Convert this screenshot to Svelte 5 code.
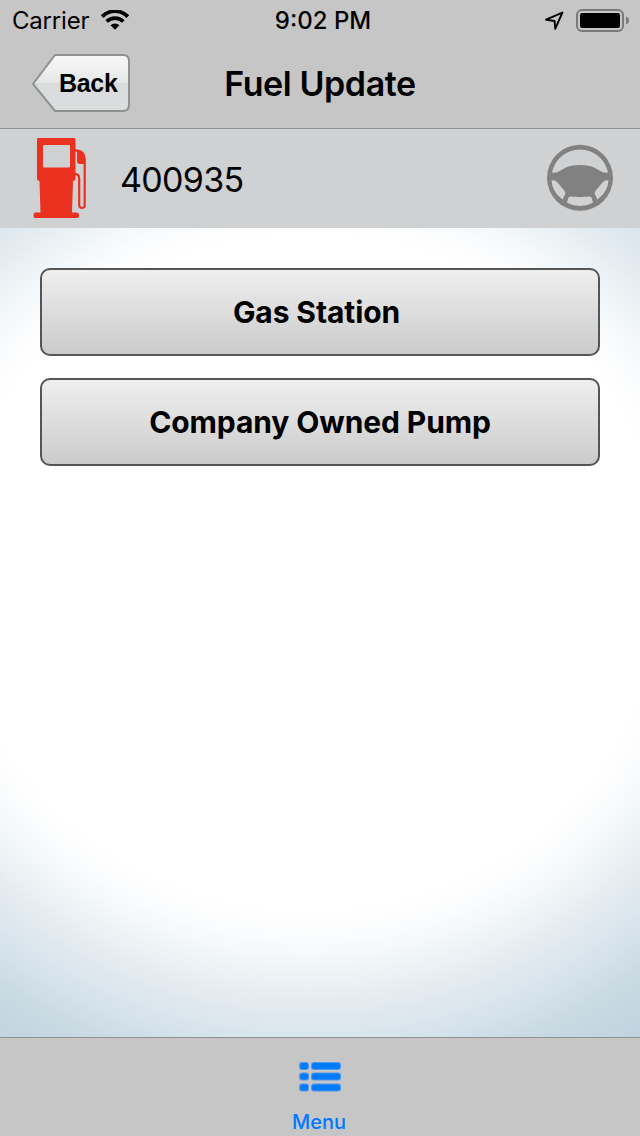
<script>
  const vehicleNumber = '400935';
  const options = ['Gas Station ', 'Company Owned Pump'];
</script>

<div class="screen">
  <header class="top">
    <div class="status-bar">
      <div class="carrier">
        <span class="carrier-name">Carrier</span>
        <svg class="wifi" width="28" height="20" viewBox="0 0 28 20" aria-hidden="true">
          <path d="M1.2 6.6A17.8 17.8 0 0 1 26.8 6.6" fill="none" stroke="#000" stroke-width="3.8" />
          <path d="M5.7 11.6A11.6 11.6 0 0 1 22.3 11.6" fill="none" stroke="#000" stroke-width="3.6" />
          <path d="M14 19.7L9.5 15.3A6.4 6.4 0 0 1 18.5 15.3Z" />
        </svg>
      </div>
      <span class="time">9:02 PM</span>
      <div class="indicators">
        <svg width="20" height="20" viewBox="0 0 20 20" aria-hidden="true">
          <path
            d="M18.4 2.6L11.2 18.8L10.6 11L2 9.7Z"
            fill="none"
            stroke="#000"
            stroke-width="1.9"
            stroke-linejoin="round"
          />
        </svg>
        <svg class="battery" width="54" height="24" viewBox="0 0 54 24" aria-hidden="true">
          <rect x="1" y="2" width="46" height="21" rx="5" fill="none" stroke="#7b7b7b" stroke-width="2" />
          <rect x="4" y="5" width="40" height="15" rx="2.2" />
          <path d="M50 8.5Q53 9.7 53 12.5Q53 15.3 50 16.5Z" fill="#7b7b7b" />
        </svg>
      </div>
    </div>

    <div class="nav-bar">
      <button class="back">
        <svg class="back-shape" width="98" height="58" viewBox="0 0 98 58" aria-hidden="true">
          <defs>
            <linearGradient id="back-fill" x1="0" y1="0" x2="0" y2="1">
              <stop offset="0" stop-color="#f9f9f9" />
              <stop offset="0.5" stop-color="#e5e6e6" />
              <stop offset="0.5" stop-color="#d8dcdd" />
              <stop offset="1" stop-color="#dadede" />
            </linearGradient>
          </defs>
          <path
            d="M23 1H91Q97 1 97 7V51Q97 57 91 57H23L1 30Z"
            fill="url(#back-fill)"
            stroke="#909090"
            stroke-width="2"
          />
        </svg>
        <span class="back-label">Back</span>
      </button>
      <h1>Fuel Update</h1>
    </div>
  </header>

  <section class="vehicle">
    <svg class="pump" width="54" height="82" viewBox="0 0 54 82" aria-hidden="true">
      <g fill="#ea301e">
        <path
          fill-rule="evenodd"
          d="M5 1H41Q42.5 1 42.5 2.5V42Q42.5 43.5 40 44L39 75.5H44Q46 75.5 46 78V79Q46 81 44 81H2Q0.5 81 0.5 79V78Q0.5 75.5 2 75.5H7.5L6.5 44Q4 43.5 4 42V2.5Q4 1 5 1ZM11 8Q10 8 10 9V29.5Q10 30.5 11 30.5H36Q37 30.5 37 29.5V9Q37 8 36 8Z"
        />
        <path d="M44 13.5Q51 14.5 52 21V27H47Q44 27 44 24Z" />
      </g>
      <path
        d="M42 13.4Q51.7 13.5 51.7 23V68Q51.7 71 49 71Q46.2 71 46.2 68V42Q46.2 36.8 42 36.8"
        fill="none"
        stroke="#ea301e"
        stroke-width="2.2"
      />
    </svg>
    <span class="vehicle-number">{vehicleNumber}</span>
    <svg class="wheel" width="68" height="68" viewBox="0 0 68 68" aria-hidden="true">
      <!-- rim disc with the four openings cut out -->
      <path
        fill="#818181"
        fill-rule="evenodd"
        d="M34 0.8A33 33 0 1 1 34 66.8A33 33 0 1 1 34 0.8Z
          M6 28.6A28.5 28.5 0 0 1 62 28.6Q57 29.4 50 24.5Q45 21 34 21Q23 21 18 24.5Q11 29.4 6 28.6Z
          M5.5 36.5Q9.5 35.5 12 39L18.5 47Q19.8 48.6 19 50.5L16.5 55.5Q6 47.5 5.5 36.5Z
          M62.5 36.5Q58.5 35.5 56 39L49.5 47Q48.2 48.6 49 50.5L51.5 55.5Q62 47.5 62.5 36.5Z
          M21 58.7L22.2 54Q22.8 52.4 24.5 52.5Q34 53.4 43.5 52.5Q45.2 52.4 45.8 54L47 58.7Q34 65.5 21 58.7Z"
      />
    </svg>
  </section>

  <main>
    {#each options as option}
      <button class="option">{option}</button>
    {/each}
  </main>

  <nav class="tab-bar">
    <button class="tab">
      <svg width="42" height="30" viewBox="0 0 42 30" aria-hidden="true">
        {#each [0, 10.5, 21.5] as y}
          <g transform="translate(0 {y})" fill="#007aff">
            <rect x="0" y="0" width="10" height="8" rx="3" opacity="0.6" />
            <rect x="1.5" y="1" width="7.5" height="6" rx="2" />
            <rect x="12" y="0" width="30" height="8" rx="3" opacity="0.6" />
            <rect x="13" y="1" width="28" height="6" rx="2" />
          </g>
        {/each}
      </svg>
      <span class="tab-label">Menu</span>
    </button>
  </nav>
</div>

<style>
  :global(body) {
    margin: 0;
  }

  .screen {
    display: flex;
    flex-direction: column;
    width: 640px;
    height: 1136px;
    overflow: hidden;
    font-family: Inter, 'Liberation Sans', sans-serif;
    color: #000;
  }

  button {
    margin: 0;
    padding: 0;
    border: none;
    background: none;
    font: inherit;
    color: inherit;
  }

  svg {
    display: block;
    flex: none;
  }

  .top {
    box-sizing: border-box;
    height: 129px;
    background: #c6c6c6;
    border-bottom: 1px solid #929292;
  }

  /* Status bar */
  .status-bar {
    display: grid;
    grid-template-columns: 1fr auto 1fr;
    align-items: center;
    height: 40px;
    padding: 0 10px 0 12px;
    font-size: 24px;
    line-height: 38px;
  }

  .carrier {
    display: flex;
    align-items: center;
    gap: 12px;
  }

  .carrier-name {
    width: 77px;
    padding-top: 2px;
    letter-spacing: -0.2px;
    white-space: nowrap;
  }

  .time {
    padding: 2px 0 0 4px;
    font-weight: 550;
  }

  .indicators {
    display: flex;
    align-items: center;
    justify-content: flex-end;
    gap: 12px;
  }

  /* Navigation bar */
  .nav-bar {
    display: grid;
    grid-template-columns: 1fr auto 1fr;
    height: 88px;
    padding: 0 32px;
  }

  .back {
    display: grid;
    width: 98px;
    height: 58px;
    margin-top: 14px;
  }

  .back-shape,
  .back-label {
    grid-area: 1 / 1;
  }

  .back-label {
    padding-left: 27px;
    font-family: 'Liberation Sans', Arial, sans-serif;
    font-size: 25px;
    font-weight: bold;
    letter-spacing: -0.3px;
    line-height: 58px;
    text-align: left;
  }

  h1 {
    margin: 0;
    font-size: 34px;
    font-weight: 600;
    letter-spacing: -0.4px;
    line-height: 88px;
  }

  /* Vehicle row */
  .vehicle {
    display: flex;
    align-items: center;
    box-sizing: border-box;
    height: 99px;
    padding: 0 26px 2px 33px;
    background: #d0d1d3;
  }

  .vehicle-number {
    flex: 1;
    padding: 4px 0 0 33px;
    font-size: 34px;
    letter-spacing: -0.7px;
    line-height: 93px;
  }

  main {
    display: flex;
    flex: 1;
    flex-direction: column;
    gap: 22px;
    padding: 40px;
    background: radial-gradient(
      710px 676px at 310px 344px,
      #fff 50%,
      #fbfcfd 53.5%,
      #f5f9fb 56.5%,
      #eef3f6 59.5%,
      #e6edf1 63%,
      #e0e8ef 66%,
      #d7e4ec 69.5%,
      #c8d9e2 76%,
      #c0d3df 83%
    );
  }

  .option {
    box-sizing: border-box;
    height: 88px;
    border: 2px solid #555;
    border-radius: 10px;
    background: linear-gradient(#efefef, #cbcbcb);
    font-size: 30px;
    font-weight: 700;
    letter-spacing: -0.1px;
    white-space: pre;
  }

  /* Tab bar */
  .tab-bar {
    display: flex;
    justify-content: center;
    box-sizing: border-box;
    height: 99px;
    background: #c6c6c6;
    border-top: 1px solid #929292;
  }

  .tab {
    display: flex;
    flex-direction: column;
    align-items: center;
    padding-top: 24px;
    color: #007aff;
  }

  .tab-label {
    margin-top: 18px;
    padding-right: 2px;
    font-size: 20px;
    font-weight: 500;
    line-height: 24px;
  }
</style>
